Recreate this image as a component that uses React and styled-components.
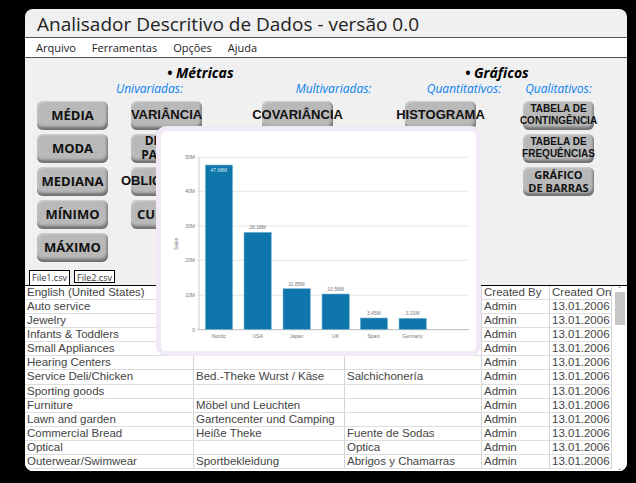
import React from 'react';
import styled, {createGlobalStyle} from 'styled-components';

const GlobalStyle = createGlobalStyle`
    html, body {
        margin: 0;
        background: #000;
    }
    body {
        font-family: "Open Sans", sans-serif;
    }
`;

const Page = styled.div`
    width: 636px;
    height: 483px;
    padding: 9px 0 0 25px;
    box-sizing: border-box;
    overflow: hidden;
`;

const Window = styled.div`
    position: relative;
    display: flex;
    flex-direction: column;
    width: 602px;
    height: 462px;
    background: #f0f0f0;
    border-radius: 8px;
    overflow: hidden;
`;

const TitleBar = styled.div`
    height: 28px;
    padding-left: 12px;
    font-size: 19px;
    line-height: 30px;
    color: #222;
    white-space: nowrap;
    border-bottom: 1px solid #555;
`;

const MenuBar = styled.div`
    display: flex;
    gap: 16px;
    height: 19px;
    padding-left: 11px;
    background: #fff;
    font-size: 11px;
    line-height: 19px;
    color: #222;
    border-bottom: 1px solid #555;
`;

const Panel = styled.div`
    flex: none;
    height: 212px;
    box-sizing: border-box;
    padding-top: 7px;
`;

const HeadingRow = styled.div`
    display: flex;
    height: 16px;
    padding-left: 142px;
`;

const Heading = styled.div`
    width: ${props => props.$width}px;
    font-size: 14px;
    line-height: 16px;
    font-weight: 700;
    font-style: italic;
    color: #000;
    white-space: nowrap;
`;

const Metrics = styled.div`
    display: grid;
    grid-template-columns: 94px 131px 143px 118px 71px;
    padding: 0 0 0 12px;
`;

const GroupLabel = styled.div`
    grid-column: ${props => props.$span};
    height: 20px;
    font-size: 12px;
    line-height: 16px;
    font-style: italic;
    color: #0a7ff0;
    text-align: center;
    white-space: nowrap;
`;

const ButtonColumn = styled.div`
    display: flex;
    flex-direction: column;
    gap: 4px;
`;

const Button = styled.div`
    display: flex;
    align-items: center;
    justify-content: center;
    width: 71px;
    height: 29px;
    box-sizing: border-box;
    padding-bottom: 2px;
    border-radius: 6px;
    background: #b9b9b9;
    box-shadow: inset -1px -3px 3px #6f6f6f, inset 1px 1px 2px #d4d4d4;
    color: #111;
    font-family: ${props => props.$narrow ? '"Liberation Sans Narrow", "Liberation Sans", sans-serif' : '"Open Sans", sans-serif'};
    font-size: ${props => props.$size || 13}px;
    line-height: ${props => props.$size ? props.$size + 2 : 14}px;
    font-weight: 700;
    text-align: center;
    white-space: pre-line;
`;

const TabStrip = styled.div`
    display: flex;
    gap: 4px;
    height: 15px;
    padding-left: 4px;
    border-bottom: 1px solid #000;
`;

const Tab = styled.div`
    width: 41px;
    height: ${props => props.$active ? 15 : 13}px;
    box-sizing: border-box;
    background: #fff;
    border: 1px solid #000;
    border-bottom: ${props => props.$active ? 'none' : '1px solid #000'};
    font-size: 9px;
    line-height: 13px;
    text-align: center;
    color: #333;
`;

const TableArea = styled.div`
    display: flex;
    flex: 1;
    min-height: 0;
    background: #fff;
`;

const Table = styled.div`
    width: 587px;
    font-family: "Liberation Sans", Arial, sans-serif;
    font-size: 11.5px;
    color: #444;
`;

const Row = styled.div`
    display: grid;
    grid-template-columns: 169px 151px 137px 68px 62px;
    height: 14.08px;
    border-bottom: 1px solid #ddd;
    box-sizing: border-box;
`;

const Cell = styled.div`
    padding-left: 2px;
    line-height: 13px;
    white-space: nowrap;
    overflow: hidden;
    border-right: 1px solid #d4d4d4;
`;

const ScrollBar = styled.div`
    display: flex;
    flex-direction: column;
    align-items: center;
    width: 15px;
    font-size: 6px;
    color: #666;
    line-height: 6px;
`;

const ScrollThumb = styled.div`
    width: 10px;
    height: 33px;
    background: #c6c6c6;
`;

const ScrollTrack = styled.div`
    flex: 1;
`;

const ChartCard = styled.div`
    position: absolute;
    left: 131px;
    top: 117px;
    width: 315px;
    height: 220px;
    background: #fff;
    border: 5px solid #f1e9f5;
    border-radius: 10px;
`;

const bars = [
    {name: 'Nordic', label: '47.68M', x: 205.3, top: 164, inside: true},
    {name: 'USA', label: '28.18M', x: 244, top: 231.3},
    {name: 'Japan', label: '11.85M', x: 283, top: 287.7},
    {name: 'UK', label: '10.58M', x: 322, top: 293},
    {name: 'Spain', label: '3.45M', x: 360.3, top: 317},
    {name: 'Germany', label: '3.31M', x: 399, top: 317.3}
];

const ticks = [
    {label: '50M', y: 156.3},
    {label: '40M', y: 190.3},
    {label: '30M', y: 225},
    {label: '20M', y: 259.3},
    {label: '10M', y: 294.3},
    {label: '0', y: 328.7}
];

const chartText = {fontFamily: '"Liberation Sans", sans-serif', fontSize: 5, fill: '#777'};

const Chart = () => (
    <svg width="315" height="220" viewBox="161 130 315 220">
        {ticks.map(tick => (
            <g key={tick.label}>
                <line x1="197" x2="469" y1={tick.y} y2={tick.y} stroke={tick.label === '0' ? '#bbb' : '#e6e6e6'} />
                <text x="195" y={tick.y + 2} textAnchor="end" {...chartText}>{tick.label}</text>
            </g>
        ))}
        <line x1="199" x2="199" y1="156" y2="329" stroke="#ccc" />
        <text transform="translate(178 243) rotate(-90)" textAnchor="middle" {...chartText}>Sales</text>
        {bars.map(bar => (
            <g key={bar.name}>
                <rect x={bar.x} y={bar.top} width="27.3" height={328.5 - bar.top} fill="#0e76ab" stroke="#7fb6d4" strokeWidth="0.6" />
                <text x={bar.x + 13.6} y={bar.inside ? bar.top + 7 : bar.top - 3} textAnchor="middle" {...chartText} fill={bar.inside ? '#dcecf5' : '#777'}>{bar.label}</text>
                <text x={bar.x + 13.6} y="337" textAnchor="middle" {...chartText}>{bar.name}</text>
            </g>
        ))}
    </svg>
);

const rows = [
    ['English (United States)', '', '', 'Created By', 'Created On'],
    ['Auto service', '', ''],
    ['Jewelry', '', ''],
    ['Infants & Toddlers', '', ''],
    ['Small Appliances', '', ''],
    ['Hearing Centers', '', ''],
    ['Service Deli/Chicken', 'Bed.-Theke Wurst / Käse', 'Salchichonería'],
    ['Sporting goods', '', ''],
    ['Furniture', 'Möbel und Leuchten', ''],
    ['Lawn and garden', 'Gartencenter und Camping', ''],
    ['Commercial Bread', 'Heiße Theke', 'Fuente de Sodas'],
    ['Optical', '', 'Optica'],
    ['Outerwear/Swimwear', 'Sportbekleidung', 'Abrigos y Chamarras']
];

const App = () => {
    return <Page>
        <GlobalStyle />
        <Window>
            <TitleBar>Analisador Descritivo de Dados - versão 0.0</TitleBar>
            <MenuBar>
                <span>Arquivo</span>
                <span>Ferramentas</span>
                <span>Opções</span>
                <span>Ajuda</span>
            </MenuBar>
            <Panel>
                <HeadingRow>
                    <Heading $width={298}>• Métricas</Heading>
                    <Heading>• Gráficos</Heading>
                </HeadingRow>
                <Metrics>
                    <GroupLabel $span="1 / span 2">Univariadas:</GroupLabel>
                    <GroupLabel $span="3">Multivariadas:</GroupLabel>
                    <GroupLabel $span="4">Quantitativos:</GroupLabel>
                    <GroupLabel $span="5">Qualitativos:</GroupLabel>
                    <ButtonColumn>
                        <Button>MÉDIA</Button>
                        <Button>MODA</Button>
                        <Button>MEDIANA</Button>
                        <Button>MÍNIMO</Button>
                        <Button>MÁXIMO</Button>
                    </ButtonColumn>
                    <ButtonColumn>
                        <Button $narrow $size={13}>VARIÂNCIA</Button>
                        <Button $size={12}>{'DESVIO\nPADRÃO'}</Button>
                        <Button $narrow $size={13}>OBLIQUIDADE</Button>
                        <Button>CURTOSE</Button>
                    </ButtonColumn>
                    <ButtonColumn>
                        <Button $narrow $size={13}>COVARIÂNCIA</Button>
                    </ButtonColumn>
                    <ButtonColumn>
                        <Button $narrow $size={13}>HISTOGRAMA</Button>
                    </ButtonColumn>
                    <ButtonColumn>
                        <Button $narrow $size={10}>{'TABELA DE\nCONTINGÊNCIA'}</Button>
                        <Button $narrow $size={10}>{'TABELA DE\nFREQUÊNCIAS'}</Button>
                        <Button $size={11}>{'GRÁFICO\nDE BARRAS'}</Button>
                    </ButtonColumn>
                </Metrics>
            </Panel>
            <TabStrip>
                <Tab $active>File1.csv</Tab>
                <Tab>File2.csv</Tab>
            </TabStrip>
            <TableArea>
                <Table>
                    {rows.map((row, index) => (
                        <Row key={row[0]}>
                            <Cell>{row[0]}</Cell>
                            <Cell>{row[1]}</Cell>
                            <Cell>{row[2]}</Cell>
                            <Cell>{index === 0 ? row[3] : 'Admin'}</Cell>
                            <Cell>{index === 0 ? row[4] : '13.01.2006 - 10:00'}</Cell>
                        </Row>
                    ))}
                </Table>
                <ScrollBar>
                    <span>⌃</span>
                    <ScrollThumb />
                    <ScrollTrack />
                    <span>⌄</span>
                </ScrollBar>
            </TableArea>
            <ChartCard>
                <Chart />
            </ChartCard>
        </Window>
    </Page>;
};

export default App;
